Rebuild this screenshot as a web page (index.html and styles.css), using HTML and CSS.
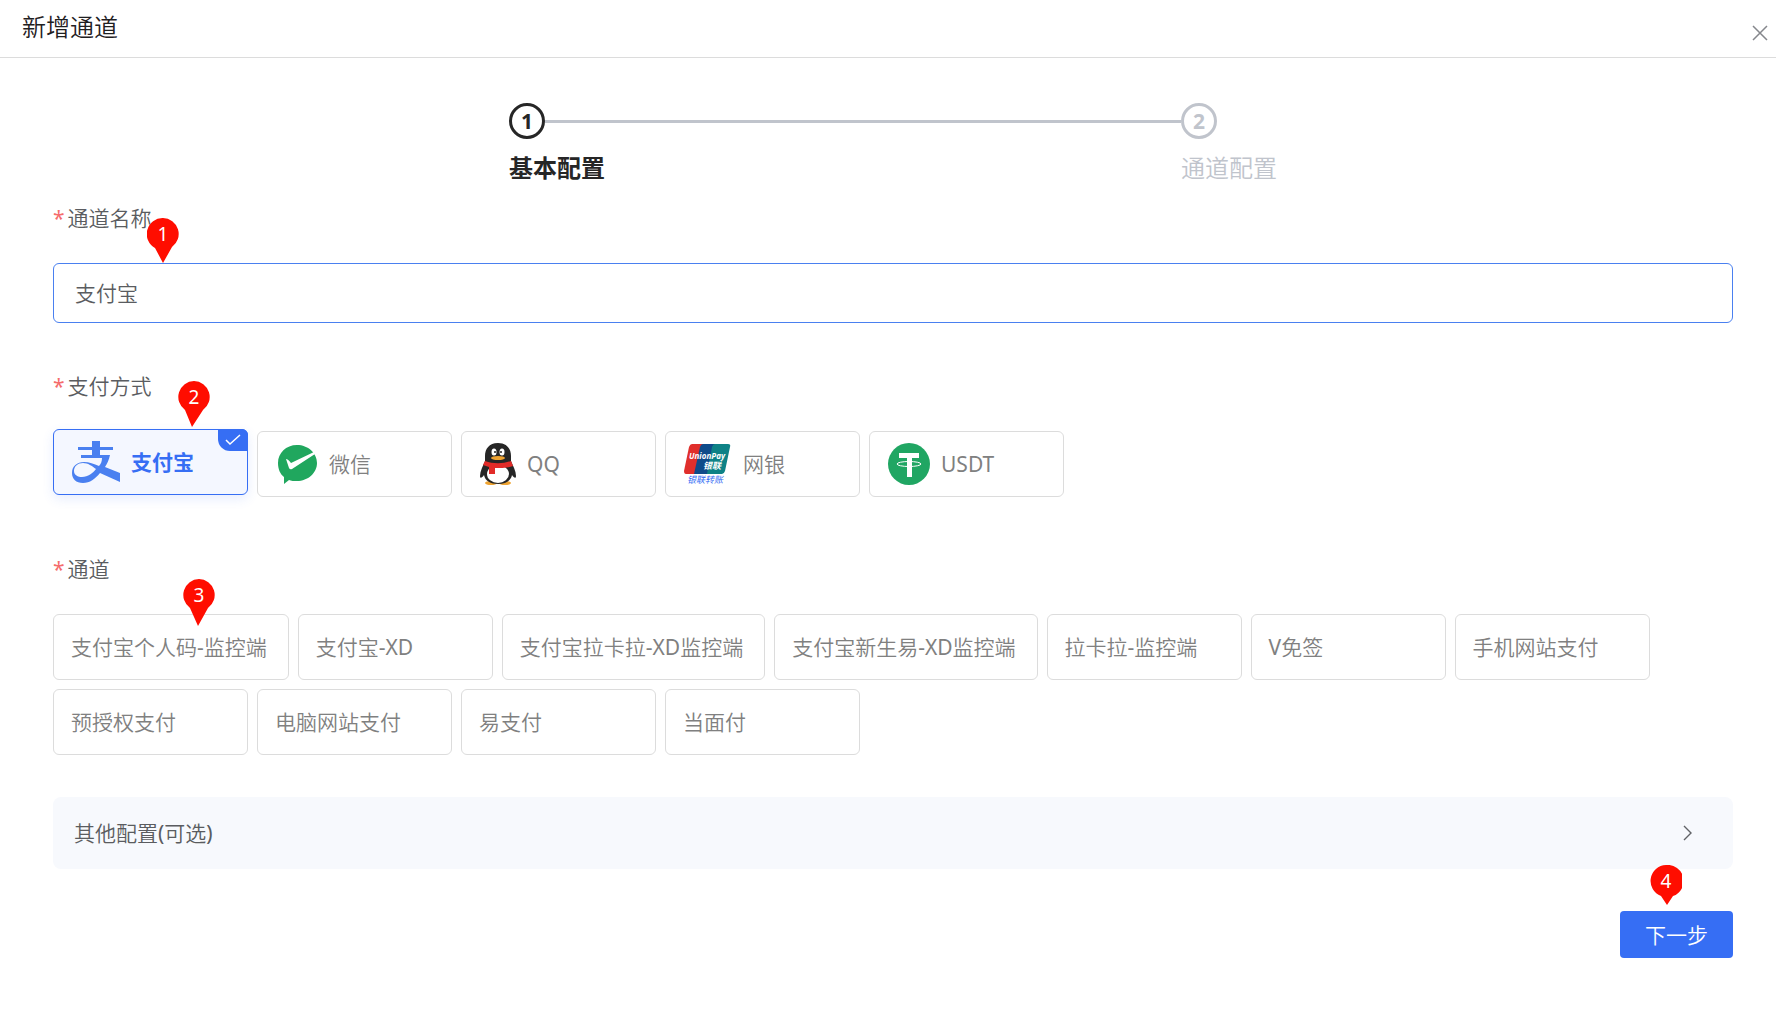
FILE: index.html
```html
<!DOCTYPE html>
<html lang="zh-CN">
<head>
  <meta charset="UTF-8">
  <title>新增通道</title>
  <link rel="stylesheet" href="styles.css">
</head>
<body>
  <header class="header">
    <h1>新增通道</h1>
    <button class="close-btn" type="button" aria-label="关闭">
      <svg width="16" height="16" viewBox="0 0 16 16"><path d="M1 1L15 15M15 1L1 15" fill="none" stroke="#85878c" stroke-width="1.5"/></svg>
    </button>
  </header>

  <form class="content">
    <!-- Steps -->
    <div class="steps">
      <div class="step active">
        <div class="step-head"><span class="step-num">1</span><span class="step-line"></span></div>
        <div class="step-title">基本配置</div>
      </div>
      <div class="step">
        <div class="step-head"><span class="step-num">2</span></div>
        <div class="step-title">通道配置</div>
      </div>
    </div>

    <!-- Channel name -->
    <div class="form-item name-item">
      <label class="label" for="channelName">通道名称</label>
      <input class="input" id="channelName" type="text" value="支付宝">
      <span class="pin pin-name"><svg width="32" height="46" viewBox="0 0 32 46"><path d="M16 0a16 16 0 0 1 9 29L16 45L8 30A16 16 0 0 1 16 0z" fill="#ff0d00"/></svg><b>1</b></span>
    </div>

    <!-- Pay type -->
    <fieldset class="form-item pay-item">
      <legend class="label">支付方式</legend>
      <div class="cards">
        <label class="card selected">
          <input type="radio" name="payType" checked>
          <svg class="icon" width="48" height="42" viewBox="0 0 48 42">
            <path d="M20 0h8v6h13v3H28v5h10c-1 5-3 9-5 12l15 6v9L28 32c-5 6-10 10-17 10C4 42 0 38 0 32c0-7 5-11 12-11 5 0 10 2 15 4 2-2 3-5 3-8H9v-3h11V9H6V6h14zM11 22c-5 0-9 3-9 8 0 4 4 6 8 6 6 0 11-4 14-8-4-3-8-6-13-6z" fill="#4a80f0"/>
          </svg>
          <span>支付宝</span>
          <span class="check"><svg width="16" height="12" viewBox="0 0 16 12"><path d="M1 6L5 10L15 1" fill="none" stroke="#fff" stroke-width="1.5"/></svg></span>
        </label>
        <label class="card">
          <input type="radio" name="payType">
          <svg class="icon" width="42" height="40" viewBox="0 0 42 40">
            <path d="M21 1c11 0 20 8 20 18s-9 18-20 18c-3 0-6 0-8-1l-5 4V33C4 30 2 25 2 19 2 9 10 1 21 1z" fill="#20a75e"/>
            <path d="M10 15q2 0 5 4L38 8l1 2-23 15q-2 1-3-1z" fill="#fff"/>
          </svg>
          <span>微信</span>
        </label>
        <label class="card">
          <input type="radio" name="payType">
          <svg class="icon" width="36" height="42" viewBox="0 0 36 42">
            <ellipse cx="11" cy="40" rx="6" ry="2" fill="#efa432"/><ellipse cx="25" cy="40" rx="6" ry="2" fill="#efa432"/>
            <path d="M18 0C9 0 5 6 5 13v5C3 23 0 28 0 33c0 3 2 2 4-1 1 6 7 9 14 9s13-3 14-9c2 3 4 4 4 1 0-5-3-10-5-15v-5C31 6 27 0 18 0z" fill="#262626"/>
            <ellipse cx="18" cy="31" rx="11" ry="9" fill="#fff"/>
            <path d="M5 18c8 3 18 3 26 0l2 5c-5 2-12 2-18 2v6H9v-7l-6-2z" fill="#e22b28"/>
            <ellipse cx="14" cy="9" rx="2.5" ry="3.5" fill="#fff"/><ellipse cx="22" cy="9" rx="2.5" ry="3.5" fill="#fff"/>
            <circle cx="15" cy="9" r="1" fill="#222"/><circle cx="21" cy="9" r="1" fill="#222"/>
            <ellipse cx="18" cy="15" rx="7" ry="2" fill="#efa432"/>
          </svg>
          <span>QQ</span>
        </label>
        <label class="card">
          <input type="radio" name="payType">
          <svg class="icon" width="48" height="42" viewBox="0 0 48 42">
            <path d="M8 1h13L14 31H2Q0 31 0 28L5 4Q6 1 8 1z" fill="#e02f2c"/>
            <path d="M19 1h14L26 31H10L16 4Q17 1 19 1z" fill="#0f4b8a"/>
            <path d="M31 1h13Q47 1 46 4L41 28Q40 31 38 31H23L28 4Q29 1 31 1z" fill="#0e8286"/>
            <text class="up-en" x="5" y="16">UnionPay</text>
            <text class="up-cn" x="19" y="26">银联</text>
            <text class="up-label" x="3" y="40">银联转账</text>
          </svg>
          <span>网银</span>
        </label>
        <label class="card">
          <input type="radio" name="payType">
          <svg class="icon" width="42" height="42" viewBox="0 0 42 42">
            <circle cx="21" cy="21" r="21" fill="#20a663"/>
            <path d="M11 10h20v5h-7v19h-5V15h-8z" fill="#fff"/>
            <ellipse cx="21" cy="21" rx="12" ry="2.5" fill="none" stroke="#fff"/>
          </svg>
          <span>USDT</span>
        </label>
      </div>
      <span class="pin pin-pay"><svg width="32" height="46" viewBox="0 0 32 46"><path d="M16 0a16 16 0 0 1 9 29L14 46L7 29A16 16 0 0 1 16 0z" fill="#ff0d00"/></svg><b>2</b></span>
    </fieldset>

    <!-- Channel -->
    <fieldset class="form-item channel-item">
      <legend class="label">通道</legend>
      <div class="cards">
        <label class="card"><input type="radio" name="channel">支付宝个人码-监控端</label>
        <label class="card"><input type="radio" name="channel">支付宝-XD</label>
        <label class="card"><input type="radio" name="channel">支付宝拉卡拉-XD监控端</label>
        <label class="card"><input type="radio" name="channel">支付宝新生易-XD监控端</label>
        <label class="card"><input type="radio" name="channel">拉卡拉-监控端</label>
        <label class="card"><input type="radio" name="channel">V免签</label>
        <label class="card"><input type="radio" name="channel">手机网站支付</label>
        <label class="card"><input type="radio" name="channel">预授权支付</label>
        <label class="card"><input type="radio" name="channel">电脑网站支付</label>
        <label class="card"><input type="radio" name="channel">易支付</label>
        <label class="card"><input type="radio" name="channel">当面付</label>
      </div>
      <span class="pin pin-channel"><svg width="32" height="47" viewBox="0 0 32 47"><path d="M16 0a16 16 0 0 1 9 29L15 47L7 29A16 16 0 0 1 16 0z" fill="#ff0d00"/></svg><b>3</b></span>
    </fieldset>

    <button class="collapse" type="button">
      <span>其他配置(可选)</span>
      <svg width="10" height="16" viewBox="0 0 10 16"><path d="M1 1L8 8L1 15" fill="none" stroke="#606266" stroke-width="1.4"/></svg>
    </button>

    <div class="footer">
      <button class="next-btn" type="button">下一步</button>
      <span class="pin pin-next"><svg width="32" height="40" viewBox="0 0 32 40"><path d="M16 0a16 16 0 0 1 7 31L17 40L11 31A16 16 0 0 1 16 0z" fill="#ff0d00"/></svg><b>4</b></span>
    </div>
  </form>
</body>
</html>
```

FILE: styles.css
```css
* {
  box-sizing: border-box;
  margin: 0;
  padding: 0;
}

body {
  font-family: "Noto Sans", "Noto Sans CJK SC DemiLight", "Noto Sans CJK SC", sans-serif;
  font-size: 21px;
  line-height: 30px;
  color: #5a5c60;
  background: #fff;
}

button, input {
  font: inherit;
  color: inherit;
}

button {
  border: none;
  cursor: pointer;
}

.header {
  display: flex;
  justify-content: space-between;
  height: 58px;
  padding: 12px 8px 0 22px;
  border-bottom: 1px solid #dcdcdc;
}

.header h1 {
  font-size: 24px;
  font-weight: 400;
  color: #1f2022;
}

.close-btn {
  align-self: flex-start;
  display: flex;
  background: none;
  padding-top: 13px;
}

.content {
  padding: 45px 43px 0 53px;
}

/* Steps */
.steps {
  display: flex;
  width: 768px;
  max-width: 100%;
  margin: 0 auto;
  color: #c0c4cc;
}

.step:first-child {
  flex: 1;
}

.step-head {
  display: flex;
  align-items: center;
}

.step-num {
  display: flex;
  justify-content: center;
  align-items: center;
  width: 36px;
  height: 36px;
  border: 3px solid #c0c4cc;
  border-radius: 50%;
  font-weight: 700;
}

.step-line {
  flex: 1;
  height: 3px;
  background: #c0c4cc;
}

.step-title {
  font-size: 24px;
  line-height: 36px;
  margin-top: 11px;
}

.active .step-num {
  color: #262626;
  border-color: #262626;
}

.active .step-title {
  color: #262626;
  font-family: "Noto Sans", "Noto Sans CJK SC", sans-serif;
  font-weight: 700;
}

/* Form */
.form-item {
  position: relative;
  border: none;
}

.name-item {
  margin-top: 17px;
}

.pay-item {
  margin-top: 48px;
}

.channel-item {
  margin-top: 57px;
}

.label {
  display: block;
  margin-bottom: 30px;
}

.label::before {
  content: "*";
  color: #f56c6c;
  margin-right: 3px;
}

.input {
  display: block;
  width: 100%;
  height: 60px;
  padding: 0 21px 2px;
  border: 1px solid #4a80f0;
  border-radius: 6px;
  outline: none;
}

.cards {
  display: flex;
  flex-wrap: wrap;
  gap: 9px;
}

.card {
  position: relative;
  display: flex;
  align-items: center;
  gap: 11px;
  min-width: 195px;
  height: 66px;
  padding: 0 21px 0 17px;
  border: 1px solid #dcdcdc;
  border-radius: 6px;
  color: #808080;
  cursor: pointer;
}

.pay-item .card {
  padding-left: 18px;
}

.card input {
  position: absolute;
  opacity: 0;
}

.icon {
  flex: none;
}

.selected {
  transform: translateY(-2px);
  border-color: #366ef4;
  background: #f4f7ff;
  color: #366ef4;
  font-family: "Noto Sans", "Noto Sans CJK SC", sans-serif;
  font-weight: 700;
  box-shadow: 0 4px 12px rgba(54, 110, 244, 0.12);
}

.check {
  position: absolute;
  top: -1px;
  right: -1px;
  display: flex;
  justify-content: center;
  align-items: center;
  width: 30px;
  height: 22px;
  background: #366ef4;
  border-radius: 0 6px 0 12px;
}

.up-en {
  font: italic 700 8px "Noto Sans", sans-serif;
  fill: #fff;
}

.up-cn {
  font: italic 700 9px "Noto Sans CJK SC", sans-serif;
  fill: #fff;
}

.up-label {
  font: italic 400 9px "Noto Sans CJK SC", sans-serif;
  fill: #366ef4;
}

.collapse {
  display: flex;
  justify-content: space-between;
  align-items: center;
  width: 100%;
  height: 72px;
  margin-top: 42px;
  padding: 0 40px 0 21px;
  border-radius: 8px;
  background: #f7f9fd;
}

.footer {
  position: relative;
  display: flex;
  justify-content: flex-end;
  margin-top: 42px;
}

.next-btn {
  height: 47px;
  padding: 0 25px;
  border-radius: 4px;
  background: #366ef4;
  color: #fff;
}

/* Number pins */
.pin {
  position: absolute;
  width: 32px;
}

.pin svg {
  display: block;
}

.pin b {
  position: absolute;
  top: 1px;
  left: 0;
  width: 32px;
  text-align: center;
  font-size: 19px;
  font-weight: 400;
  color: #fff;
}

.pin-name {
  left: 94px;
  top: 15px;
}

.pin-pay {
  left: 125px;
  top: -50px;
}

.pin-channel {
  left: 130px;
  top: -35px;
}

.pin-next {
  right: 51px;
  top: -46px;
}
```
